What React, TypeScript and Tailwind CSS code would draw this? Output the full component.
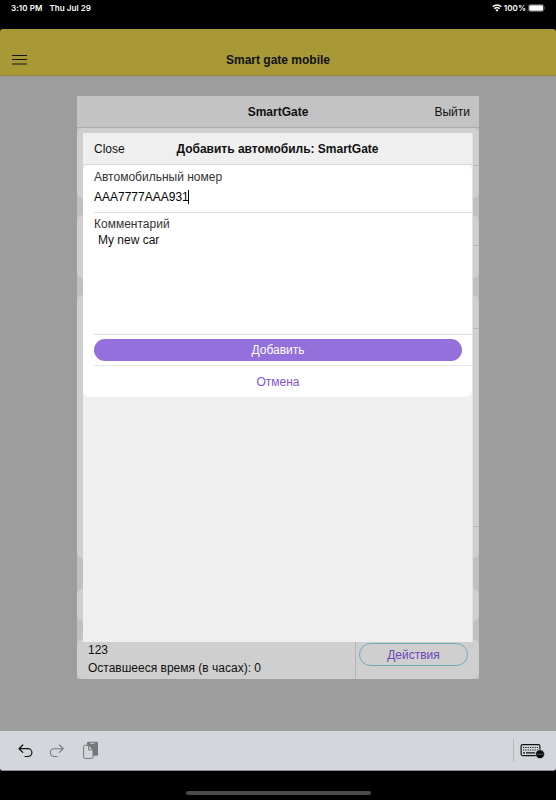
import { useState } from "react";

const listCards = [
  { id: "gate", box: "h-[70px]", line: "mt-[37px]" },
  { id: "owner", box: "mt-[17px] h-[63px]", line: "mt-[30px]" },
  { id: "cars", box: "mt-[17px] h-[263px]", line: "mt-[33px]", secondLine: "mt-[197px]" },
  { id: "guests", box: "mt-[31px] h-8", line: "" },
];

function StatusBar() {
  return (
    <div className="flex h-[29px] items-start justify-between bg-black pl-[11px] pr-[10px] pt-px font-['Inter',sans-serif] text-[8px] font-semibold leading-[14px] text-white">
      <div className="flex gap-[7px] whitespace-pre tracking-[0.08px]">
        <span>3:10 PM</span>
        <span>Thu Jul 29</span>
      </div>
      <div className="flex items-center">
        <svg width="10" height="8" viewBox="0 0 10 8" fill="none" stroke="white" strokeWidth="1.5" className="mr-[2px]">
          <path d="M.7 2.8a6.2 6.2 0 0 1 8.6 0M2.4 4.7a3.8 3.8 0 0 1 5.2 0" />
          <path d="M3.4 6.1a2.2 2.2 0 0 1 3.2 0L5 7.8Z" fill="white" stroke="none" />
        </svg>
        <span className="mr-[2px] tracking-[0.05px]">100%</span>
        <svg width="18" height="8" viewBox="0 0 18 8">
          <rect x=".4" y=".4" width="15.4" height="7.2" rx="2.2" fill="none" stroke="#777" strokeWidth=".8" />
          <rect x="1.2" y="1.2" width="13.8" height="5.6" rx="1.3" fill="white" />
          <path d="M16.5 2.7c.8.3.8 2.3 0 2.6Z" fill="#777" />
        </svg>
      </div>
    </div>
  );
}

function AppHeader() {
  return (
    <header className="flex h-[47px] items-start rounded-t-[3px] border-b border-[#948a3c] bg-[#a89936] pl-3 pr-[27px] pt-[22px]">
      <button type="button" aria-label="Menu" className="mt-[4px] h-[10px] w-[15px]">
        <svg width="15" height="10" viewBox="0 0 15 10">
          <path d="M0 .5h15M0 4.5h15" stroke="#14141c" />
          <path d="M0 9h15" stroke="#5e5726" strokeWidth="2" />
        </svg>
      </button>
      <h1 className="flex-1 text-center text-[12px] font-bold leading-[18px] text-[#111219]">
        Smart gate mobile
      </h1>
    </header>
  );
}

function AddCarDialog() {
  const [plate, setPlate] = useState("AAA7777AAA931");
  const [comment, setComment] = useState("My new car");

  return (
    <div className="absolute left-[6px] top-[37px] h-[509px] w-[390px] border-r border-[#e2e2e2] bg-[#efefef]">
      {/* Title */}
      <div className="flex h-8 items-center border-b border-[#dadada] pl-[11px]">
        <button type="button" className="w-[60px] text-left">
          Close
        </button>
        <h2 className="-ml-[60px] flex-1 pr-[11px] text-center font-bold">
          Добавить автомобиль: SmartGate
        </h2>
      </div>

      {/* Form */}
      <div className="h-[232px] rounded-[6px] bg-white pl-[11px]">
        <div className="flex h-12 flex-col border-b border-[#dedede] pt-[3px]">
          <label className="leading-[18px] text-[#333]">Автомобильный номер</label>
          <div className="mt-[2px] flex items-center">
            <input
              value={plate}
              onChange={(e) => setPlate(e.target.value)}
              className="h-[18px] w-[94px] bg-transparent text-black outline-none"
            />
            <span className="h-[14px] w-px bg-black" />
          </div>
        </div>
        <div className="flex h-[122px] flex-col border-b border-[#dedede] pt-[2px]">
          <label className="leading-[18px] text-[#333]">Комментарий</label>
          <textarea
            value={comment}
            onChange={(e) => setComment(e.target.value)}
            className="h-[90px] w-[360px] resize-none bg-transparent pl-[4px] leading-[15px] text-[#111] outline-none"
          />
        </div>
        <div className="h-[31px] border-b border-[#e6e6e6] pt-[4px]">
          <button type="button" className="block h-[22px] w-[368px] rounded-full bg-[#9370db] text-center text-white">
            Добавить
          </button>
        </div>
        <button type="button" className="mt-[5px] block h-[22px] w-[368px] text-center text-[#8354d4]">
          Отмена
        </button>
      </div>
    </div>
  );
}

export default function App() {
  return (
    <div className="flex h-[800px] w-[556px] flex-col bg-black font-['Liberation_Sans',Arial,sans-serif] text-[12px] text-[#111]">
      <StatusBar />
      <AppHeader />

      <main className="h-[655px] bg-[#9d9d9d] pl-[77px] pt-[20px]">
        <div className="relative h-[583px] w-[402px] bg-[#c0c0c0]">
          <div className="flex h-8 items-center border-b border-[#acacac] bg-[#c3c3c3] px-[9px]">
            <h2 className="-mr-[45px] flex-1 text-center font-bold">SmartGate</h2>
            <button type="button" className="w-[45px] whitespace-nowrap text-right">
              Выйти
            </button>
          </div>

          {listCards.map((card) => (
            <div key={card.id} className={`flow-root rounded-[6px] bg-[#cfcfcf] pl-[11px] ${card.box}`}>
              {card.line && <div className={`h-px bg-[#b5b5b5] ${card.line}`} />}
              {card.secondLine && <div className={`h-px bg-[#b5b5b5] ${card.secondLine}`} />}
            </div>
          ))}

          <div className="mt-[18px] flex h-10 rounded-[6px] bg-[#cfcfcf]">
            <div className="w-[279px] border-r border-[#b5b5b5] pl-[11px] pt-[2px] leading-[18px]">
              <p>123</p>
              <p>Оставшееся время (в часах): 0</p>
            </div>
            <button
              type="button"
              className="ml-[3px] mt-[4px] h-[23px] w-[109px] rounded-full border border-[#6aacbd] pt-px text-[#7045b8]"
            >
              Действия
            </button>
          </div>

          <AddCarDialog />
        </div>
      </main>

      {/* Keyboard shortcuts bar */}
      <div className="flex h-10 items-center rounded-b-[3px] border-b border-[#8b8d91] bg-[#d3d6db] pl-[18px] pr-[11px]">
        <svg width="15" height="14" viewBox="0 0 15 14" fill="none" stroke="#111" strokeWidth="1.2" strokeLinecap="round" strokeLinejoin="round">
          <path d="M4.8 1 1 4.7l3.8 3.7M1 4.7h9a3.8 3.8 0 0 1 0 7.8H7" />
        </svg>
        <svg width="15" height="14" viewBox="0 0 15 14" fill="none" stroke="#777a7e" strokeWidth="1.1" strokeLinecap="round" strokeLinejoin="round" className="ml-[17px]">
          <path d="M9.4 1l3.8 3.7-3.8 3.7M13.2 4.7h-9a3.8 3.8 0 0 0 0 7.8h3" />
        </svg>
        <svg width="16" height="19" viewBox="0 0 16 19" className="ml-[18px]">
          <rect x="4" y=".7" width="11" height="14" rx="1.3" fill="#75777b" />
          <path d="M7.2 2.3h4.4" stroke="#d3d6db" />
          <path
            d="M1.6 4.3h4.2l4.2 4.4v7.5a1.2 1.2 0 0 1-1.2 1.2H1.8a1.2 1.2 0 0 1-1.2-1.2V5.3a1 1 0 0 1 1-1Z"
            fill="#d3d6db"
            stroke="#75777b"
          />
          <path d="M5.6 4.5v4.4H10" fill="none" stroke="#75777b" />
        </svg>
        <div className="ml-auto h-[23px] w-px bg-[#b2b5b9]" />
        <svg width="25" height="16" viewBox="0 0 25 16" className="ml-[6px]">
          <rect x="1.1" y="1.6" width="18.8" height="11" rx="1.5" fill="none" stroke="#111" strokeWidth="1.2" />
          <path d="M3 4.5h15M3 7h15" stroke="#222" strokeWidth="1.2" strokeDasharray="1.3 1" />
          <path d="M3 9.8h2M6 9.8h9" stroke="#111" strokeWidth="1.2" />
          <circle cx="20" cy="11.2" r="4.4" fill="#090909" stroke="#d3d6db" strokeWidth=".6" />
          <path d="M17.6 11.2h5" stroke="#aaa" strokeDasharray="1 1" />
        </svg>
      </div>

      {/* Home indicator */}
      <div className="mx-auto mt-[20px] h-[4px] w-[185px] rounded-full bg-[#4b4b4b]" />
    </div>
  );
}
